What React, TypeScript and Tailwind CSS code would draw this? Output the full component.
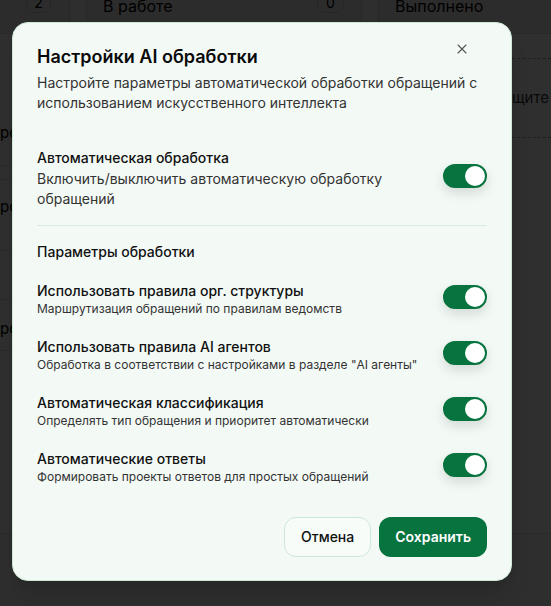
import { X } from 'lucide-react';

const params = [
  { title: 'Использовать правила орг. структуры', desc: 'Маршрутизация обращений по правилам ведомств' },
  { title: 'Использовать правила AI агентов', desc: 'Обработка в соответствии с настройками в разделе "AI агенты"' },
  { title: 'Автоматическая классификация', desc: 'Определять тип обращения и приоритет автоматически' },
  { title: 'Автоматические ответы', desc: 'Формировать проекты ответов для простых обращений' },
];

function Toggle() {
  return (
    <button className="flex h-6 w-11 shrink-0 items-center justify-end rounded-full border-2 border-[#07733f] bg-[#07733f] shadow-[0_5px_12px_rgba(0,0,0,0.13)]">
      <span className="block h-5 w-5 rounded-full bg-white" />
    </button>
  );
}

function Background() {
  return (
    <div className="min-h-[606px] w-[551px] overflow-hidden bg-[#e4e6e4] text-black">
      {/* stats row */}
      <div className="ml-[-206px] flex gap-4">
        <div className="flex h-[34px] w-[276px] shrink-0 items-start justify-end border-b border-r border-[#c8c8c8] bg-[#dadada] pr-[18px]">
          <span className="mt-[-8px] flex h-[21px] w-[25px] items-center justify-center rounded-lg border border-[#bdbdbd] text-sm">2</span>
        </div>
        <div className="flex h-[34px] w-[276px] shrink-0 items-start justify-between border-b border-l border-r border-[#c8c8c8] bg-[#dadada] pl-[16px] pr-[17px]">
          <span className="mt-[-6px] text-base">В работе</span>
          <span className="mt-[-8px] flex h-[21px] w-[27px] items-center justify-center rounded-lg border border-[#bdbdbd] text-sm">0</span>
        </div>
        <div className="flex h-[34px] w-[276px] shrink-0 items-start border-b border-l border-[#c8c8c8] bg-[#dadada] pl-[16px]">
          <span className="mt-[-6px] text-base">Выполнено</span>
        </div>
      </div>
      {/* content */}
      <div className="flex h-[500px] border-b border-[#cfcfcf] bg-[#eaece9]">
        <div className="w-[40px] pt-[88px]">
          <div className="h-[43px] text-[15px] leading-[22px]">ро</div>
          <div className="h-[14px] border-t border-[#d2d2d2]" />
          <div className="h-[71px] border-t border-[#d2d2d2] pt-[16px] text-[15px] leading-[22px]">роо</div>
          <div className="h-[49px] border-t border-[#d2d2d2]" />
          <div className="h-[51px] border-t border-[#d2d2d2] pt-[18px] text-[15px] leading-[22px]">роо</div>
          <div className="h-[173px] border-t border-[#d2d2d2]" />
        </div>
        <div className="ml-auto w-[39px] shrink-0 pt-[24px]">
          <div className="flex h-[80px] items-center overflow-hidden border-y border-dashed border-[#9a9a9a] text-[15px] whitespace-nowrap text-[#333]">
            щите об
          </div>
        </div>
      </div>
    </div>
  );
}

export default function App() {
  return (
    <div className="relative h-[606px] w-[551px] overflow-hidden font-['Inter','Noto_Sans',sans-serif]">
      <Background />
      <div className="absolute inset-0 bg-black/80" />

      <div className="absolute left-[12px] top-[22px] w-[500px] rounded-2xl border border-[#cde7d5] bg-[#f3faf6] px-6 pb-[23px] pt-5 shadow-xl">
        <button className="absolute right-[41px] top-[18px] text-[#555]">
          <X size={16} strokeWidth={1.6} />
        </button>

        <h2 className="text-lg leading-7 font-semibold text-[#0a0a0a]">Настройки AI обработки</h2>
        <p className="mt-0.5 text-sm leading-5 text-[#333]">
          Настройте параметры автоматической обработки обращений с использованием искусственного интеллекта
        </p>

        <div className="mt-[35px] flex items-start justify-between gap-4">
          <div className="max-w-[390px]">
            <div className="text-sm leading-5 font-medium text-[#111]">Автоматическая обработка</div>
            <div className="mt-px text-sm leading-5 text-[#333]">
              Включить/выключить автоматическую обработку обращений
            </div>
          </div>
          <div className="mt-4">
            <Toggle />
          </div>
        </div>

        <div className="mt-4 h-px bg-[#d6eddd]" />

        <div className="mt-4 text-sm leading-5 font-medium text-[#111]">Параметры обработки</div>

        <div className="mt-[19px] space-y-5">
          {params.map((p) => (
            <div key={p.title} className="flex items-start justify-between gap-4">
              <div>
                <div className="text-sm leading-5 font-medium text-[#111]">{p.title}</div>
                <div className="text-xs leading-4 text-[#333]">{p.desc}</div>
              </div>
              <div className="mt-1">
                <Toggle />
              </div>
            </div>
          ))}
        </div>

        <div className="mt-[32px] flex justify-end gap-2">
          <button className="h-10 rounded-xl border border-[#cde7d5] bg-[#f7fcf9] px-4 text-sm font-medium text-[#111]">
            Отмена
          </button>
          <button className="h-10 rounded-xl bg-[#07733f] px-4 text-sm font-semibold text-white">
            Сохранить
          </button>
        </div>
      </div>
    </div>
  );
}
